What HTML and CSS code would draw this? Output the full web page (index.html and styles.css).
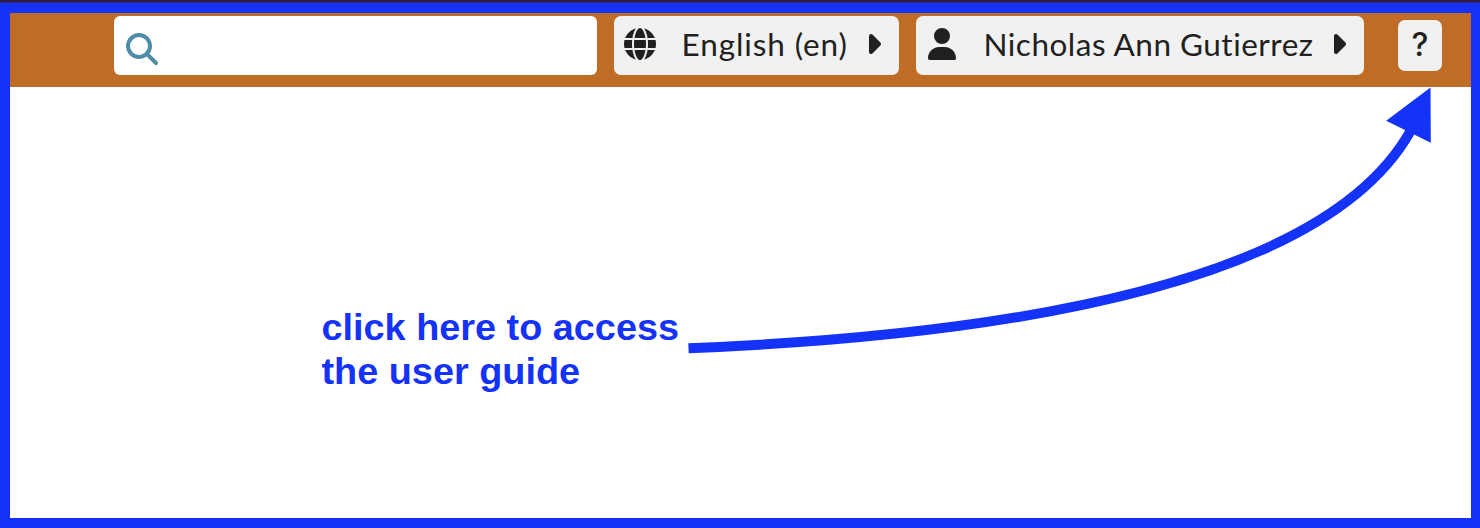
FILE: index.html
```html
<!DOCTYPE html>
<html lang="en">
<head>
<meta charset="utf-8">
<title>User guide</title>
<link rel="stylesheet" href="styles.css">
</head>
<body>
<div class="strip"></div>
<main class="frame">
  <header class="bar">
    <label class="search">
      <svg class="icon" width="32" height="32" viewBox="0 0 512 512"><path d="M416 208c0 45.900-14.900 88.300-40 122.700L502.600 457.400c12.500 12.500 12.500 32.800 0 45.300s-32.800 12.500-45.300 0L330.700 376c-34.400 25.200-76.800 40-122.700 40C93.100 416 0 322.900 0 208S93.100 0 208 0S416 93.100 416 208zM208 352a144 144 0 1 0 0-288 144 144 0 1 0 0 288z"/></svg>
    </label>
    <button class="pill language">
      <svg class="icon" width="32" height="32" viewBox="0 0 512 512"><path d="M352 256c0 22.200-1.200 43.600-3.300 64H163.300c-2.200-20.400-3.300-41.800-3.300-64s1.200-43.600 3.300-64H348.700c2.200 20.400 3.300 41.800 3.300 64zm28.800-64H503.900c5.300 20.500 8.100 41.900 8.100 64s-2.800 43.500-8.100 64H380.800c2.100-20.600 3.200-42 3.200-64s-1.100-43.400-3.200-64zm112.600-32H376.700c-10-63.900-29.800-117.400-55.300-151.600c78.300 20.700 142 77.500 171.900 151.600zm-149.100 0H167.700c6.100-36.400 15.500-68.600 27-94.700c10.500-23.600 22.200-40.700 33.500-51.500C239.400 3.200 248.700 0 256 0s16.600 3.200 27.800 13.800c11.300 10.800 23 27.900 33.500 51.500c11.600 26 20.900 58.200 27 94.700zm-209 0H18.600C48.600 85.900 112.200 29.100 190.600 8.400C165.100 42.600 145.300 96.100 135.300 160zM8.100 192H131.200c-2.100 20.600-3.200 42-3.200 64s1.100 43.400 3.200 64H8.100C2.800 299.500 0 278.100 0 256s2.800-43.500 8.100-64zM194.700 446.600c-11.600-26-20.900-58.200-27-94.600H344.300c-6.100 36.400-15.500 68.600-27 94.600c-10.500 23.600-22.200 40.700-33.500 51.500C272.600 508.800 263.300 512 256 512s-16.600-3.200-27.800-13.800c-11.300-10.800-23-27.900-33.500-51.500zM135.300 352c10 63.900 29.800 117.400 55.300 151.600C112.200 482.900 48.600 426.100 18.600 352H135.300zm358.100 0c-30 74.100-93.600 130.900-171.900 151.600c25.500-34.200 45.200-87.700 55.300-151.600H493.400z"/></svg>
      <span class="label">English (en)</span>
      <svg class="icon caret" width="16" height="32" viewBox="0 0 256 512"><path d="M246.600 278.600c12.500-12.500 12.500-32.800 0-45.300l-128-128c-9.200-9.200-22.900-11.900-34.900-6.900s-19.800 16.600-19.800 29.600l0 256c0 12.900 7.800 24.600 19.800 29.600s25.700 2.200 34.900-6.900l128-128z"/></svg>
    </button>
    <button class="pill user">
      <svg class="icon" width="28" height="32" viewBox="0 0 448 512"><path d="M224 256A128 128 0 1 0 224 0a128 128 0 1 0 0 256zm-45.700 48C79.800 304 0 383.800 0 482.300C0 498.700 13.300 512 29.700 512H418.300c16.400 0 29.700-13.300 29.700-29.700C448 383.800 368.200 304 269.700 304H178.300z"/></svg>
      <span class="label">Nicholas Ann Gutierrez</span>
      <svg class="icon caret" width="16" height="32" viewBox="0 0 256 512"><path d="M246.600 278.600c12.500-12.500 12.500-32.800 0-45.300l-128-128c-9.200-9.200-22.900-11.900-34.900-6.900s-19.800 16.600-19.800 29.600l0 256c0 12.900 7.800 24.600 19.800 29.600s25.700 2.200 34.900-6.900l128-128z"/></svg>
    </button>
    <button class="help">?</button>
  </header>
  <p class="note">click here to access<br>the user guide</p>
</main>
<svg class="arrow" width="1480" height="528" viewBox="0 0 1480 528">
  <path class="shaft" d="M688.500 348.300Q1303 323 1410.500 131"/>
  <path class="head" d="M1430.500 87.500L1386.200 120.800L1430.800 142.800Z"/>
</svg>
</body>
</html>
```
FILE: styles.css
```css
* { box-sizing: border-box; }
body {
  margin: 0;
  height: 528px;
  display: flex;
  flex-direction: column;
  overflow: hidden;
  background: #fff;
}
.strip {
  height: 3px;
  flex: none;
  background: #2a2048;
  border-bottom: 1px solid #35297a;
}
.frame {
  flex: 1;
  border: 10px solid #1432f8;
  border-right-width: 9px;
}
.bar {
  display: flex;
  align-items: flex-start;
  height: 74px;
  padding: 3px 29px 0 104px;
  background: #bf6c26;
}
.icon { flex: none; display: block; fill: currentColor; }
.search {
  width: 483px;
  height: 59px;
  margin-right: 17px;
  padding: 17px 12px;
  border-radius: 6px;
  background: #fff;
  color: #4f8ca8;
}
.pill, .help {
  border: 0;
  background: #f1f1f1;
  color: #221f20;
  font-family: Lato, sans-serif;
}
.pill {
  display: flex;
  align-items: flex-start;
  height: 59px;
  border-radius: 7px;
  font-size: 31.5px;
}
.label {
  flex: 1;
  text-align: left;
  white-space: nowrap;
  line-height: 38px;
}
.language { width: 285px; margin-right: 17px; padding: 12px 18px 0 10px; }
.language .label { margin: -3px 0 0 25.5px; letter-spacing: 0.9px; }
.user { width: 448px; padding: 12px 18px 0 12px; }
.user .label { margin: -3px 0 0 27.5px; letter-spacing: 0.5px; }
.help {
  width: 44px;
  height: 51px;
  margin: 4px 0 0 34px;
  padding: 0 0 2px;
  border-radius: 7px;
  font-family: Inter, sans-serif;
  font-size: 32px;
  font-weight: 500;
}
.note {
  margin: 218px 0 0 311.5px;
  font: bold 37.85px/44px "Liberation Sans", Arial, sans-serif;
  color: #1432f8;
}
.arrow { position: absolute; left: 0; top: 0; pointer-events: none; }
.shaft { fill: none; stroke: #1432f8; stroke-width: 10; }
.head { fill: #1432f8; }
```
